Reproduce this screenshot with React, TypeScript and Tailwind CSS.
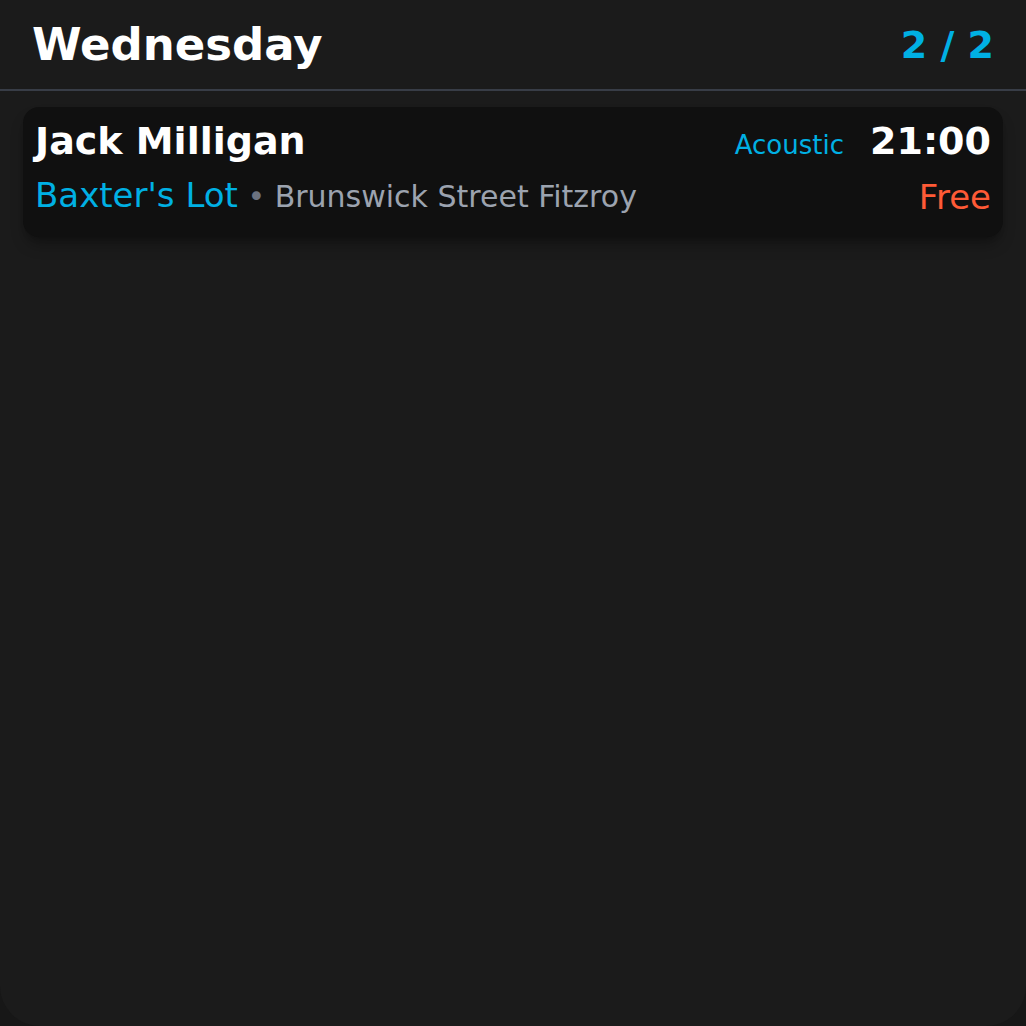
import React from 'react';

const gigs = [
  {
    artist: 'Jack Milligan',
    genre: 'Acoustic',
    time: '21:00',
    venue: "Baxter's Lot",
    address: 'Brunswick Street Fitzroy',
    price: 'Free',
  },
];

export default function App() {
  return (
    <div className="min-h-screen bg-[#171717] font-['DejaVu_Sans',sans-serif]">
      <div className="h-screen bg-[#1b1b1b] rounded-b-[40px] flex flex-col">
        {/* Header */}
        <div className="flex items-center justify-between px-8 h-[91px] border-b-2 border-[#383d47]">
          <h1 className="text-[45px] font-bold text-white leading-none">Wednesday</h1>
          <span className="text-[38px] font-bold text-[#00b0e4] leading-none">2 / 2</span>
        </div>

        <div className="px-[23px] pt-4 flex flex-col gap-3">
          {gigs.map((g) => (
            <div
              key={g.artist}
              className="bg-[#101010] rounded-2xl px-3 pt-3 pb-5 shadow-lg shadow-black/30 flex justify-between"
            >
              <div className="flex flex-col">
                <p className="text-[38px] font-bold text-white leading-[44px]">{g.artist}</p>
                <p className="mt-3 text-[34px] leading-[40px] text-[#9ca3af]">
                  <span className="text-[#00b0e4]">{g.venue}</span>
                  <span className="text-[30px]">
                    <span className="text-[#6b7280]"> • </span>
                    {g.address}
                  </span>
                </p>
              </div>
              <div className="flex flex-col items-end">
                <div className="flex items-baseline gap-[26px]">
                  <span className="text-[26px] text-[#00b0e4]">{g.genre}</span>
                  <span className="text-[38px] font-bold text-white leading-[44px]">{g.time}</span>
                </div>
                <span className="mt-3 text-[34px] leading-[40px] text-[#ff5a36]">{g.price}</span>
              </div>
            </div>
          ))}
        </div>
      </div>
    </div>
  );
}
